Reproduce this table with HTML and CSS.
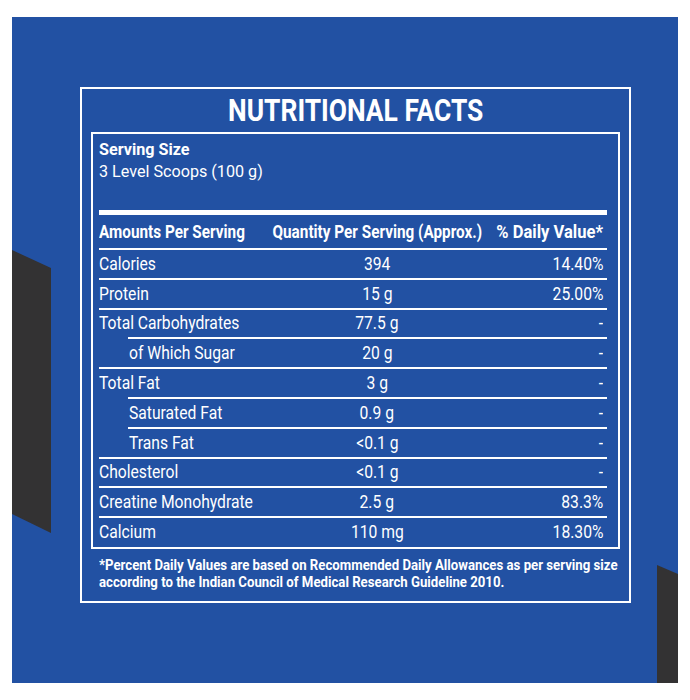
FILE: index.html
```html
<!DOCTYPE html>
<html lang="en">
<head>
<meta charset="utf-8">
<title>Nutritional Facts</title>
<link rel="stylesheet" href="styles.css">
</head>
<body>
<div class="panel">
  <div class="deco deco-left"></div>
  <div class="deco deco-right"></div>
  <section class="facts">
    <h1 class="title"><span class="t">NUTRITIONAL FACTS</span></h1>
    <div class="inner">
      <div class="serving">
        <div class="serving-label"><span class="t">Serving Size</span></div>
        <div class="serving-value"><span class="t">3 Level Scoops (100 g)</span></div>
      </div>
      <div class="thick-rule"></div>
      <div class="row head">
        <span class="c1"><span class="t">Amounts Per Serving</span></span>
        <span class="c2"><span class="t">Quantity Per Serving (Approx.)</span></span>
        <span class="c3"><span class="t">% Daily Value*</span></span>
      </div>
      <div class="row"><span class="c1"><span class="t">Calories</span></span><span class="c2"><span class="t">394</span></span><span class="c3"><span class="t">14.40%</span></span></div>
      <div class="row"><span class="c1"><span class="t">Protein</span></span><span class="c2"><span class="t">15 g</span></span><span class="c3"><span class="t">25.00%</span></span></div>
      <div class="row"><span class="c1"><span class="t">Total Carbohydrates</span></span><span class="c2"><span class="t">77.5 g</span></span><span class="c3"><span class="t">-</span></span></div>
      <div class="row sub"><span class="c1"><span class="t">of Which Sugar</span></span><span class="c2"><span class="t">20 g</span></span><span class="c3"><span class="t">-</span></span></div>
      <div class="row"><span class="c1"><span class="t">Total Fat</span></span><span class="c2"><span class="t">3 g</span></span><span class="c3"><span class="t">-</span></span></div>
      <div class="row sub"><span class="c1"><span class="t">Saturated Fat</span></span><span class="c2"><span class="t">0.9 g</span></span><span class="c3"><span class="t">-</span></span></div>
      <div class="row sub"><span class="c1"><span class="t">Trans Fat</span></span><span class="c2"><span class="t">&lt;0.1 g</span></span><span class="c3"><span class="t">-</span></span></div>
      <div class="row"><span class="c1"><span class="t">Cholesterol</span></span><span class="c2"><span class="t">&lt;0.1 g</span></span><span class="c3"><span class="t">-</span></span></div>
      <div class="row"><span class="c1"><span class="t">Creatine Monohydrate</span></span><span class="c2"><span class="t">2.5 g</span></span><span class="c3"><span class="t">83.3%</span></span></div>
      <div class="row"><span class="c1"><span class="t">Calcium</span></span><span class="c2"><span class="t">110 mg</span></span><span class="c3"><span class="t">18.30%</span></span></div>
    </div>
    <div class="note">
      <span class="t">*Percent Daily Values are based on Recommended Daily Allowances as per serving size</span>
      <span class="t">according to the Indian Council of Medical Research Guideline 2010.</span>
    </div>
  </section>
</div>
</body>
</html>
```
FILE: styles.css
```css
html, body {
  margin: 0;
  padding: 0;
  background: #ffffff;
}

body {
  width: 690px;
  height: 700px;
  font-family: Roboto, "Liberation Sans", sans-serif;
  color: #ffffff;
}

.t {
  display: inline-block;
  flex: none;
  white-space: nowrap;
  transform: scaleX(var(--sx, 0.87));
  transform-origin: left center;
}

.panel {
  position: relative;
  box-sizing: border-box;
  margin: 17px 0 0 12px;
  width: 666px;
  height: 666px;
  background: #2251a3;
  padding: 70px 0 0 68px;
  overflow: hidden;
}

.deco {
  position: absolute;
  background: #333233;
}

.deco-left {
  left: 0;
  top: 233px;
  width: 39px;
  height: 283px;
  clip-path: polygon(0 0, 100% 18px, 100% 100%, 0 264px);
}

.deco-right {
  right: 0;
  top: 548px;
  width: 21px;
  height: 118px;
  clip-path: polygon(0 0, 100% 9px, 100% 100%, 0 100%);
}

.facts {
  position: relative;
  box-sizing: border-box;
  width: 551px;
  height: 516px;
  border: 2px solid #ffffff;
  padding: 0 9px;
}

.title {
  display: flex;
  justify-content: center;
  margin: 0;
  height: 43px;
  line-height: 43px;
  font-size: 32px;
  font-weight: 700;
  --sx: 0.825;
}

.title .t {
  transform-origin: center center;
}

.inner {
  box-sizing: border-box;
  border: 2px solid #ffffff;
  padding: 4px 11px 1px 6px;
}

.serving {
  font-size: 17px;
  line-height: 22px;
  --sx: 0.95;
}

.serving-label {
  font-weight: 700;
}

.thick-rule {
  margin-top: 28px;
  height: 5px;
  background: #ffffff;
}

.row {
  display: grid;
  grid-template-columns: 172px 212px 1fr;
  align-items: center;
  box-sizing: border-box;
  height: 29.8px;
  padding-top: 2px;
  font-size: 18px;
  line-height: 22px;
  background: linear-gradient(#ffffff, #ffffff) no-repeat 0 0 / 100% 2px;
  --sx: 0.87;
}

.row.head {
  height: 33px;
  padding-top: 0;
  background: none;
  font-weight: 700;
  --sx: 0.85;
}

.row.head .c3 {
  --sx: 0.92;
}

.row.sub {
  background-position: 29px 0;
  background-size: calc(100% - 29px) 2px;
}

.row.sub .c1 {
  padding-left: 30px;
}

.c1 {
  display: flex;
  min-width: 0;
}

.c2 {
  display: flex;
  justify-content: center;
  min-width: 0;
}

.c2 .t {
  transform-origin: center center;
}

.c3 {
  display: flex;
  justify-content: flex-end;
  min-width: 0;
  padding-right: 4px;
}

.c3 .t {
  transform-origin: right center;
}

.note {
  display: flex;
  flex-direction: column;
  align-items: flex-start;
  margin: 8px 0 0 8px;
  font-size: 15px;
  line-height: 17px;
  font-weight: 700;
  --sx: 0.88;
}
```
